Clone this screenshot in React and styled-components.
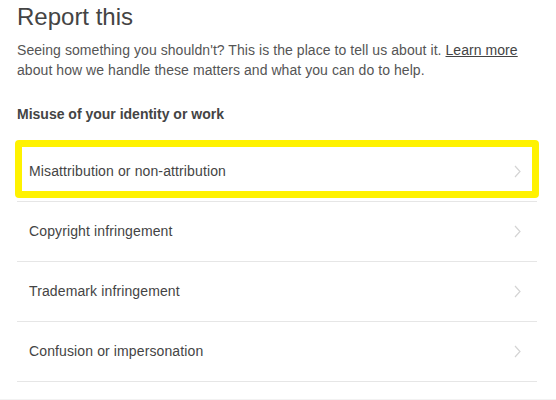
import styled, { createGlobalStyle } from 'styled-components'

const GlobalStyle = createGlobalStyle`
  body {
    margin: 0;
    background: #fff;
    font-family: "Liberation Sans", Arial, sans-serif;
    color: #444;
  }
`
const Page = styled.main`
  padding: 0 19px 0 17px;
`
const Title = styled.h1`
  font-size: 24px;
  font-weight: 400;
  line-height: 28px;
  color: #444;
  margin: 3px 0 0;
`
const Intro = styled.p`
  font-size: 14px;
  line-height: 19.6px;
  letter-spacing: 0.06px;
  color: #555;
  margin: 10px 0 0;
  a {
    color: #444;
    text-decoration: underline;
  }
`
const Section = styled.h2`
  font-size: 14px;
  font-weight: 700;
  line-height: 20px;
  color: #444;
  margin: 24px 0 18px;
`
const List = styled.ul`
  list-style: none;
  margin: 0;
  padding: 0;
`
const Item = styled.li`
  position: relative;
  display: flex;
  align-items: center;
  justify-content: space-between;
  height: 59px;
  padding: 0 16px 0 12px;
  border-bottom: 1px solid #e6e6e6;
  font-size: 14px;
  line-height: 19px;
  letter-spacing: 0.12px;
  color: #444;
  cursor: pointer;
  ${({ $focused }) =>
    $focused &&
    `
    &::after {
      content: '';
      position: absolute;
      top: -2px;
      bottom: 3px;
      left: -2px;
      right: -2px;
      border: 7px solid #fff200;
      border-radius: 4px;
    }
  `}
`
const Footer = styled.div`
  margin-top: 17px;
  border-top: 1px solid #f2f2f2;
  height: 20px;
`

const Chevron = () => (
  <svg width="7" height="13" viewBox="0 0 7 13" fill="none">
    <polyline points="1,1 6,6.5 1,12" stroke="#d4d4d4" strokeWidth="1.2" />
  </svg>
)

const reasons = [
  'Misattribution or non-attribution',
  'Copyright infringement',
  'Trademark infringement',
  'Confusion or impersonation',
]

const App = () => {
  return (
    <>
      <GlobalStyle />
      <Page>
        <Title>Report this</Title>
        <Intro>
          Seeing something you shouldn't? This is the place to tell us about it.{' '}
          <a href="#">Learn more</a> about how we handle these matters and what you
          can do to help.
        </Intro>
        <Section>Misuse of your identity or work</Section>
        <List>
          {reasons.map((reason, i) => (
            <Item key={reason} $focused={i === 0}>
              <span>{reason}</span>
              <Chevron />
            </Item>
          ))}
        </List>
      </Page>
      <Footer />
    </>
  )
}

export default App
